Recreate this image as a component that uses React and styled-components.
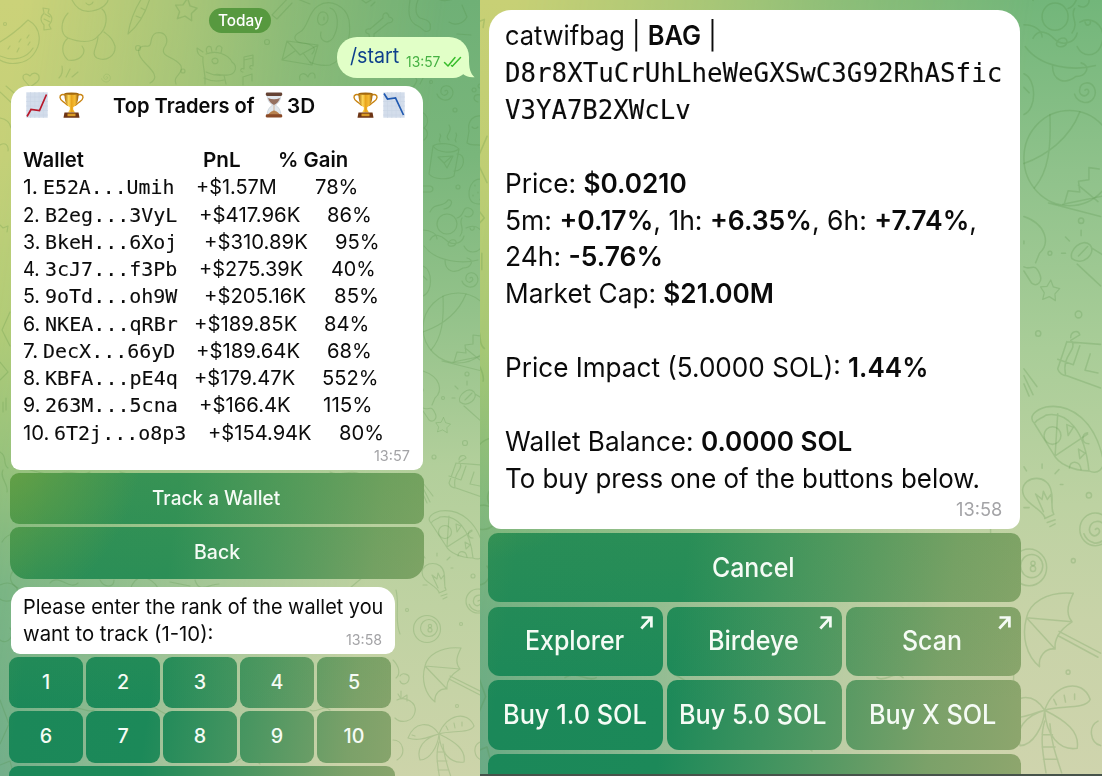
import React, { useLayoutEffect, useRef } from 'react';
import styled, { createGlobalStyle } from 'styled-components';

const GlobalStyle = createGlobalStyle`
  * { box-sizing: border-box; }
  body { margin: 0; overflow: hidden; font-family: Inter, "Liberation Sans", sans-serif; color: #0b0b0b; }
`;

/* ---------- text fitted to a column width ---------- */
const FitBox = styled.span`
  display: inline-block;
  flex: none;
  width: ${(p) => p.$w}px;
  margin-left: ${(p) => p.$ml || 0}px;
  white-space: pre;
  font-family: ${(p) => (p.$mono ? '"DejaVu Sans Mono", monospace' : 'inherit')};
  font-size: ${(p) => (p.$mono ? '0.97em' : '1em')};
  -webkit-text-stroke: ${(p) => (p.$mono ? '0.12px currentColor' : '0')};
`;
const FitInner = styled.span`
  display: inline-block;
  transform-origin: 0 50%;
`;
function Fit({ w, ml, mono, children }) {
  const ref = useRef(null);
  useLayoutEffect(() => {
    const el = ref.current;
    const apply = () => {
      el.style.transform = `scaleX(${(w + 0.6) / el.offsetWidth})`;
    };
    apply();
    document.fonts.ready.then(apply);
  }, [w]);
  return (
    <FitBox $w={w} $ml={ml} $mono={mono}>
      <FitInner ref={ref}>{children}</FitInner>
    </FitBox>
  );
}

/* ---------- wallpaper ---------- */
const Screen = styled.main`
  display: flex;
  width: 1102px;
  height: 776px;
  overflow: hidden;
`;
const Panel = styled.section`
  position: relative;
  flex: none;
  width: ${(p) => p.$w}px;
  height: 776px;
  overflow: hidden;
  isolation: isolate;
  background: linear-gradient(180deg, ${(p) => p.$right});
  &::before {
    content: '';
    position: absolute;
    inset: 0;
    z-index: -2;
    background: linear-gradient(180deg, ${(p) => p.$left});
    mask-image: linear-gradient(98deg, #000 4%, rgba(0, 0, 0, 0.62) 32%, rgba(0, 0, 0, 0.3) 50%, transparent 76%);
  }
`;
const Wallpaper = styled.svg`
  position: absolute;
  inset: 0;
  z-index: -1;
  width: 100%;
  height: 100%;
  fill: none;
  stroke: #4c8a3c;
  stroke-opacity: 0.21;
  stroke-width: 1.15;
  stroke-linecap: round;
  stroke-linejoin: round;
`;
const star = 'M0-9 L3-3 L9-2 L5 3 L6 9 L0 6 L-6 9 L-5 3 L-9-2 L-3-3Z';
const spiral = 'M0 0c2-2 4 1 2 3c-3 3-7 0-6-4c1-5 8-6 11-1c3 6-2 12-8 11c-4-1-6-3-7-6';
function Doodles({ transform }) {
  return (
    <g transform={transform}>
      {/* watermelon and candy */}
      <path d="M0 42C10 36 20 28 28 20C42 28 42 44 33 55C26 64 10 66 0 60M0 56C14 62 27 58 33 48" />
      <path d="M8 49l2-3M17 52l2-4M19 42l2-3M27 38l2-3M28 45l2-3" />
      <path d="M43 8l6 1-1 4c5 3 5 8 1 12l2 4-7 1 0-5c-4-4-4-8 0-12zM45 14l5 3M44 19l6 3" />
      {/* bear */}
      <path d="M72 0C76 8 82 13 92 11C104 9 108 2 108 0M68 13C60 22 60 34 68 38C61 44 61 54 68 60C78 62 88 54 82 46M68 38C78 42 92 44 98 36C108 28 108 14 102 9M98 36C98 46 90 54 97 58C106 62 116 56 115 46C112 36 106 34 104 32M86 3c2 3 6 2 7-1" />
      {/* carrot, star */}
      <path d="M128 34C130 22 134 10 142-2M128 34C138 26 146 12 150-2M136 16l5 2M141 8l4 2" />
      <path d={star} transform="translate(186 9) rotate(8) scale(1.2)" />
      <path d="M150 83C160 78 152 70 146 64C136 54 136 46 146 46C154 48 148 36 156 33C166 31 170 40 164 48C160 58 176 56 181 66C184 74 172 76 176 84" />
      <circle cx="138" cy="48" r="2.5" /><circle cx="183" cy="71" r="2" /><circle cx="267" cy="42" r="2.5" /><circle cx="5" cy="24" r="1.5" />
      {/* giraffe */}
      <path d="M203 52l-6-4c0 5 2 8 6 9M207 53c-2-5 1-8 4-6l1 5M216 50c0-4 4-6 6-2l-1 5M203 57C202 66 206 72 205 84M206 54C216 50 228 54 232 62C238 66 236 74 228 75C222 76 218 73 214 75M212 60c2-3 6-2 6 1s-5 4-6 0M206 72c6 3 12 4 18 3M204 78c6 3 12 4 20 2M224 75l2 9" />
      {/* notes */}
      <path d="M244 69V57l9-2v11M244 60l9-2M244 69c-3-2-5 3-1 3M253 66c-3-2-5 3-1 3M243 85v-8l9-3v7" />
      <path d="M24 80c-3-5 2-8 6-4c3-5 10-3 9 3c-1 4-7 6-9 8zM62 66c1 5 0 9-3 12M70 69l-4 8M78 72l-6 5" />
      <path d={spiral} transform="translate(106 77) scale(.55)" />
      {/* dog with envelope */}
      <path d="M300 32C292 36 294 42 302 43C312 44 318 48 312 54M300 32C308 28 308 12 318 6C330-2 346 6 349 20C352 40 344 60 330 65C322 66 314 64 310 62M319 14c3-4 9-2 9 4s-8 10-10 4c-1-3 0-6 1-8M324 17v3M330 8c8 2 10 18 3 30c-6 8-14 2-12-6" />
      <path d="M287 41L318 45L312 65L282 60ZM287 41L300 55L318 45M282 60l13-9M312 65l-9-12" />
      <path d="M272 15L290-4M290-4l20 8M272 15l5 4L292 3" />
      <path d="M369 34c-5-1-4-6 1-5l13-11c-1-6 5-7 6-1c6 1 4 6-1 6L374 34c1 6-5 7-5 0z" />
      <path d="M410 0C408 12 408 22 418 26C424 29 424 34 430 30C432 20 426 20 420 18C414 14 416 4 418 0M362 0l4 3 5-3M371 6l4-4M440 0c8 2 18-2 20-5M449 22c6 4 14 2 18-5l-5-12M457 34l14 1" />
      <path d="M0 92l18 17M6 86l14 12M0 118c6 1 10 4 11 10M0 145c5-3 9 0 8 6" />
      {/* spiral, paw, mug */}
      <path d={spiral} transform="translate(445 91)" />
      <circle cx="455" cy="110" r="2" /><circle cx="458" cy="187" r="2" /><circle cx="431" cy="82" r="1.5" />
      <path d="M400 78c4-6 14-4 17 2c-2 8-10 12-16 7M423 78l-3 6M300 80c-2-6 4-9 8-3c2-6 8-5 7 1M422 112c7 4 7 12 2 16c4 2 5 8 0 12" />
      <path d="M480 95c-7-2-8 6-2 7M474 88a2 2 0 1 0 .1 0M480 84a2 2 0 1 0 .1 0M484 117c-10-4-17 4-15 14l-2 12c5 4 10 0 16 3M472 127c2 2 4 2 6 0" />
      <path d="M433 146L429 174C434 180 448 180 454 176L459 149C452 154 438 153 433 146C438 142 454 143 459 149M457 154c10-1 8 18-3 17M438 157l15-1-6 12-3-5zM444 163l7-6M440 142c-3-4 3-4 0-8M449 140c-6-5 5-8 0-15M456 142c-3-5 3-4 0-9" />
      <path d="M423 186h7c4 1 4 5 0 6h-7M484 180c-10-4-15 6-15 14s6 12 15 9M475 185v1M478 192v1M473 195v1M480 199v1" />
      {/* noodle bowl */}
      <circle cx="447" cy="224" r="10" />
      <path d="M430 212c4-10 14-4 18-12c6-1 4 8-4 9M457 218c8-2 5-12 12-10c8 2 3 12-4 8M423 230c8 0 14 4 14 9M424 246c12 16 38 18 54 14M430 240c4-8 12-4 16 0c6 6 16 4 18-4M448 244c2-6 9-5 8-1s-8 4-8 1M460 236c6-8-2-12 2-18M466 228c12-6 22 6 16 18c-4 8-14 8-18 0M470 228c1 4 5 2 4-1M445 260c0 12 10 14 18 8c8 0 12-8 4-10" />
      <path d={spiral} transform="translate(470 278)" />
      <path d="M423 266c10 4 10 26 0 30M423 276l4 4" />
      {/* ball and plant */}
      <circle cx="458" cy="328" r="35" />
      <path d="M443 296c1 24-1 42-12 54M466 294c-8 20-26 32-43 38M454 362l3-10 9 1-1-8 8-1v-9l8 1M453 362l30-6M442 361l40 10M465 348l15 12" />
      {/* baby, flashlight */}
      <path d="M423 371c18 6 20 20 12 27l-3 7M423 408c6 3 8-4 12 5c3 6-2 10-6 7l-6-9M423 389v2" />
      <circle cx="467" cy="374" r="2" /><circle cx="443" cy="398" r="1.5" /><circle cx="465" cy="443" r="2.5" /><circle cx="434" cy="457" r="2" />
      <path d="M460 402c-3-6 8-16 14-10c5 6-6 16-14 10M465 400l7-7M464 406l18 16M475 394l10 6M458 389l-3-3M455 398l-3 0M467 381l0 4" />
      <path d={star} transform="translate(443 425) rotate(5) scale(.82)" />
      {/* gift */}
      <path d="M456 463L449 483C450 486 453 488 456 488L482 497M456 463L482 465M460 463c4 6-8 10-5 24M449 476l12 4 5-14M474 472l-4 12 10 2M459 460c0-5 6-6 7-2l-7 4" />
      <path d="M423 483l10 13M423 488l7 14M423 494l4 9" />
      {/* pizza */}
      <path d="M431 523C426 518 432 513 440 511C460 508 478 522 484 550C485 556 480 561 473 558C460 558 449 552 446 546L431 523C434 519 436 520 440 517C456 514 470 528 473 558M449 516L447 547L472 531" />
      <circle cx="445" cy="532" r="6.5" /><path d="M456 524l5 2-4 6zM465 542l5 3-4 4zM458 556c0-6 8-6 9 1M472 530c-5 1-5 8 1 8" />
      {/* bulb */}
      <path d="M439 592C436 585 422 582 422 572C423 561 442 560 444 573C446 580 443 584 446 590L439 593ZM438 588l-6-13 5 4 1-6 3 6 3-4 1 13M441 596l6-2M443 599l4-2" />
      <path d="M425 558l-2-3M437 556v-3M447 560l3-3M451 568h2M427 585h-4" />
      <circle cx="473" cy="576" r="2" /><circle cx="461" cy="624" r="1.5" /><circle cx="407" cy="610" r="1.5" /><circle cx="457" cy="706" r="1.5" />
      <path d={spiral} transform="translate(478 601) scale(1.1)" /><circle cx="478" cy="601" r="12" />
      {/* billiard ball */}
      <circle cx="427" cy="629" r="13.5" /><circle cx="429" cy="628" r="8.5" /><circle cx="430" cy="626" r="1.6" /><circle cx="430" cy="630" r="2" />
      {/* umbrella */}
      <path d="M461 648C440 646 427 656 425 666C421 680 425 694 435 702C434 694 440 688 447 689C446 680 452 674 460 669C454 662 458 654 461 648M425 666L460 669M425 666L447 689M450 676L482 692M449 679L480 695" />
      <path d="M393 660c6 6 8 14 3 18M400 676c2-4 10-2 9 3s-7 7-9 2M397 700c8-4 20 2 18 12c-2 10-14 12-20 6M398 694l3 5 6-4 0 6M401 691v7" />
      {/* palm */}
      <path d="M439 734C430 720 414 722 408 738C420 742 430 736 439 734C424 738 416 748 420 760C430 760 438 746 439 734C456 742 466 750 464 762C450 764 440 752 439 734C446 714 468 710 474 726C470 734 450 730 439 734M439 742C435 754 438 768 440 780M443 744C444 758 448 768 452 780M437 752h8M437 761h10M438 770h11M412 735l3 1M446 726l2 4M454 723l1 5M462 722l0 4" />
      <path d="M480 742c-8 4-6 16 2 18M393 740c10 0 14 14 4 20" />
      {/* left strip and gaps between messages */}
      <path d="M0 225l3 3 5-2-1 6M10 312L2 330l8 16M0 362l8 10-8 8M3 402v10M6 398v12M0 452c8 4 2 12 8 16M3 470c-4 8 6 14 4 22M2 542c8-14 26-8 28 2M14 570c-6 6-4 14 4 18" />
      <path d="M50 583c8-10 20 8 28 0M100 580c4 8 14 8 14 0M130 590c6-20 22-12 28-2M170 582l20 4M195 580c4 14 14 4 24 4M350 588l40-34M0 585c12-6 22 4 16 12c-8 8-16 2-16 2M396 590c4 16-2 30 4 44M0 640c8 6 16-6 10-12M0 700l9 24-9 20M0 765l10-4 4 15M236 762c6-6 16-6 24 2M70 710c8-6 18 4 24 0M155 708l14 8M310 710c6 4 14-6 20 0M30 470l16 4M60 474c10-6 20 4 30-2M120 472l16 4M330 472c10 6 20-4 30 2" />
    </g>
  );
}

/* ---------- bubbles ---------- */
const Column = styled.div`
  display: flex;
  flex-direction: column;
  align-items: flex-start;
  padding: ${(p) => p.$pad};
`;
const DatePill = styled.div`
  align-self: center;
  display: flex;
  align-items: center;
  justify-content: center;
  width: 62px;
  height: 25px;
  margin-top: 8px;
  padding-bottom: 1px;
  border-radius: 13px;
  background: #57993f;
  color: #fff;
  font-size: 16px;
  font-weight: 500;
`;
const OutBubble = styled.div`
  position: relative;
  align-self: flex-end;
  display: flex;
  align-items: center;
  width: 132px;
  height: 40.5px;
  margin: 4px 11px 0 0;
  padding: 0 0 3px 13px;
  border-radius: 20px 20px 16px 20px;
  background: #e1ffc7;
  color: #0d3f8c;
  font-size: 20.8px;
`;
const Tail = styled.svg`
  position: absolute;
  right: -6px;
  bottom: 0;
  width: 22px;
  height: 22px;
  fill: #e1ffc7;
`;
const SentMeta = styled.span`
  position: relative;
  display: flex;
  align-items: center;
  gap: 3px;
  margin: 12px 0 0 7px;
  color: #45b143;
  font-size: 14px;
  svg { width: 19px; height: 13px; fill: none; stroke: #38bd2c; stroke-width: 1.5; stroke-linecap: round; stroke-linejoin: round; }
`;
const Bubble = styled.article`
  position: relative;
  width: ${(p) => p.$w}px;
  height: ${(p) => p.$h}px;
  margin: ${(p) => p.$m};
  padding: ${(p) => p.$pad};
  border-radius: ${(p) => p.$r};
  background: #fff;
  font-size: ${(p) => p.$fs}px;
  line-height: ${(p) => p.$lh}px;
`;
const Line = styled.div`
  display: flex;
  height: ${(p) => p.$h || 27.27}px;
  align-items: ${(p) => p.$align || 'baseline'};
  font-weight: ${(p) => (p.$bold ? 600 : 400)};
`;
const Strong = styled.b`
  font-weight: 600;
`;
const Time = styled.time`
  position: absolute;
  right: ${(p) => p.$right}px;
  bottom: ${(p) => p.$bottom}px;
  color: #a3a3a6;
  font-size: ${(p) => p.$fs}px;
  line-height: 1;
`;

/* ---------- keyboard ---------- */
const Keyboard = styled.div`
  display: grid;
  grid-template-columns: repeat(${(p) => p.$cols}, 1fr);
  gap: ${(p) => p.$gap};
  width: ${(p) => p.$w}px;
  margin: ${(p) => p.$m};
`;
const Key = styled.button`
  position: relative;
  display: flex;
  align-items: center;
  justify-content: center;
  height: ${(p) => p.$h}px;
  padding: ${(p) => p.$pad || '0 1px 1px 0'};
  grid-column: ${(p) => (p.$wide ? '1 / -1' : 'auto')};
  border: 0;
  border-radius: ${(p) => p.$r || '9px'};
  color: #f5fbf5;
  font-family: inherit;
  font-size: ${(p) => p.$fs || 19.7}px;
  font-weight: 500;
  background-attachment: fixed;
  background-repeat: no-repeat;
  background-image:
    radial-gradient(ellipse 30% 24% at 0% 55%, rgba(128, 168, 60, 0.75), rgba(110, 165, 62, 0)),
    linear-gradient(180deg, rgba(92, 160, 78, 0.5) 55%, rgba(92, 160, 78, 0) 92%),
    linear-gradient(98deg, #3f9454 0%, #1b8859 20%, #1c8959 42%, #4a9661 60%, #7ba169 77%, #9aa970 97%);
  background-size: ${(p) => p.$bg || '480px 776px'};
  background-position: ${(p) => p.$bgPos || '0 0'};
`;
const rightKey = { $bg: '622px 1075px', $bgPos: '480px -288px', $fs: 26.8, $r: '10px 10px 12px 12px', $pad: '0 3px 2px 0' };
const LinkArrow = styled.svg`
  position: absolute;
  top: 9px;
  right: 10px;
  width: 13px;
  height: 14px;
  fill: none;
  stroke: #f5fbf5;
  stroke-width: 2.7;
`;
const Arrow = () => (
  <LinkArrow viewBox="0 0 13 14"><path d="M1.5 1.5H11.4V11.5M11 2L1.3 12.5" /></LinkArrow>
);
const BottomEdge = styled.div`
  position: absolute;
  left: 0;
  right: 0;
  bottom: 0;
  height: 2px;
  background: #46534a;
`;

/* ---------- emoji drawings ---------- */
const Emoji = styled.svg`
  flex: none;
  width: ${(p) => p.$w}px;
  height: 26px;
  margin-left: ${(p) => p.$ml || 0}px;
`;
function Chart({ ml, up }) {
  return (
    <Emoji $w={22} $ml={ml} viewBox="0 0 22 26">
      <rect x=".3" y=".3" width="21.4" height="25.4" fill="#d3ddeb" />
      <path d="M4.5 0V26M8.8 0V26M13.1 0V26M17.4 0V26M0 5H22M0 9.5H22M0 14H22M0 18.5H22M0 23H22" stroke="#c9d5e4" strokeWidth=".6" />
      {up
        ? <path d="M1 24.5L5 17.5L13.5 18.5L20.5 2.5" fill="none" stroke="#b8182a" strokeWidth="1.7" />
        : <path d="M1 1.5L4.5 7L12.5 6L20.5 23" fill="none" stroke="#1e58b0" strokeWidth="1.7" />}
    </Emoji>
  );
}
function Trophy({ ml }) {
  return (
    <Emoji $w={25} $ml={ml} viewBox="0 0 25 26">
      <defs>
        <linearGradient id="gold" x1="0" x2="1">
          <stop offset="0" stopColor="#a96a08" /><stop offset=".3" stopColor="#ffd95a" />
          <stop offset=".5" stopColor="#e9a51c" /><stop offset=".75" stopColor="#f6bd35" /><stop offset="1" stopColor="#94590a" />
        </linearGradient>
      </defs>
      <path d="M7 3.5C3.5 1.5.8 2.8 1 5.5C1.3 9 4.5 9.5 6.5 11.5C8 13 8.5 13.5 10 13.5M18 3.5C21.5 1.5 24.2 2.8 24 5.5C23.7 9 20.5 9.5 18.5 11.5C17 13 16.5 13.5 15 13.5" fill="none" stroke="#c98512" strokeWidth="1.4" />
      <path d="M5.5 1.3H19.5C19.6 9 18 13 14.2 15.2V17.5L16 20.5H9L10.8 17.5V15.2C7 13 5.4 9 5.5 1.3Z" fill="url(#gold)" />
      <ellipse cx="12.5" cy="1.6" rx="7" ry="1.2" fill="#a3690f" />
      <path d="M5.5 20.5H19.5L20.5 25.7H4.5Z" fill="#6d3515" />
      <rect x="8.5" y="21.6" width="8" height="2.6" fill="#d99a25" />
    </Emoji>
  );
}
function Hourglass({ ml }) {
  return (
    <Emoji $w={18} $ml={ml} viewBox="0 0 18 26">
      <path d="M2.2 2.5H15.8C16 8 13.5 11 10.3 13C13.5 15 16 18 15.8 23.5H2.2C2 18 4.5 15 7.7 13C4.5 11 2 8 2.2 2.5Z" fill="#e2e8ee" stroke="#b5bec7" strokeWidth=".5" />
      <path d="M3 6C7 7.8 11 7.8 15 6C14 9.5 12 11.2 9 13C6 11.2 4 9.5 3 6Z" fill="#967161" />
      <path d="M9 13V20M3 23C5 20 8 19 9 18.8C10 19 13 20 15 23Z" fill="#b8824f" stroke="#b8824f" strokeWidth=".5" />
      <rect x=".8" y=".5" width="16.4" height="3.4" rx="1.3" fill="#654234" />
      <rect x=".8" y="22.2" width="16.4" height="3.4" rx="1.3" fill="#8a4a27" />
    </Emoji>
  );
}

/* rank, rank width, address, [left, width] of address, profit and gain */
const traders = [
  ['1.', 14, 'E52A...Umih', [42.5, 130.5], '+$1.57M', [195.5, 80.5], '78%', [314.5, 42.5]],
  ['2.', 16.5, 'B2eg...3VyL', [44.5, 131.5], '+$417.96K', [198.5, 100.5], '86%', [326.5, 44.5]],
  ['3.', 16.5, 'BkeH...6Xoj', [44.5, 131.5], '+$310.89K', [204, 103], '95%', [334.5, 44.5]],
  ['4.', 16.5, '3cJ7...f3Pb', [45, 131.5], '+$275.39K', [199, 104], '40%', [331, 44.5]],
  ['5.', 16.5, '9oTd...oh9W', [45, 131.5], '+$205.16K', [204, 102], '85%', [334, 44]],
  ['6.', 16.5, 'NKEA...qRBr', [44.5, 132], '+$189.85K', [193.5, 103], '84%', [324, 44.5]],
  ['7.', 14.5, 'DecX...66yD', [42.5, 131.5], '+$189.64K', [196, 104], '68%', [327, 44.5]],
  ['8.', 16.5, 'KBFA...pE4q', [44.5, 132], '+$179.47K', [193.5, 101], '552%', [322, 56]],
  ['9.', 16.5, '263M...5cna', [45, 132], '+$166.4K', [199, 91], '115%', [323, 49.5]],
  ['10.', 26, '6T2j...o8p3', [54, 131.5], '+$154.94K', [208, 103], '80%', [339, 44.5]],
];
const TEXT_LEFT = 23;
function TraderRow({ row }) {
  const [rank, rw, addr, a, pnl, p, gain, g] = row;
  return (
    <Line>
      <Fit w={rw}>{rank}</Fit>
      <Fit w={a[1]} ml={a[0] - TEXT_LEFT - rw} mono>{addr}</Fit>
      <Fit w={p[1]} ml={p[0] - a[0] - a[1]}>{pnl}</Fit>
      <Fit w={g[1]} ml={g[0] - p[0] - p[1]}>{gain}</Fit>
    </Line>
  );
}

function LeftChat() {
  return (
    <Panel
      $w={480}
      $right="#6fb076 0%, #79b67b 20%, #93c28a 40%, #b2cf9b 60%, #bfd2a2 78%, #cdd4aa 100%"
      $left="#cbd279 0%, #c5d078 20%, #b3cc76 42%, #93c079 60%, #6fb07f 76%, #5ca582 100%"
    >
      <Wallpaper><Doodles /></Wallpaper>
      <Column $pad="0">
        <DatePill><Fit w={44.5}>Today</Fit></DatePill>
        <OutBubble>
          <Tail viewBox="0 0 22 22"><path d="M16 2C15.8 12 17.5 18 21.6 21.2C16 21.8 12.5 20 10 18L4 14Z" /></Tail>
          <Fit w={48.5}>/start</Fit>
          <SentMeta>
            <Fit w={34}>13:57</Fit>
            <svg viewBox="0 0 19 13"><path d="M1.5 7.5L5 11L12 2.5M8.5 10.5L9.3 11.2L17.5 2.5" /></svg>
          </SentMeta>
        </OutBubble>
        <Bubble $w={411.5} $h={383.5} $m="8.5px 0 0 11px" $pad="5.5px 0 0 12px" $r="17px 17px 9px 9px" $fs={20.6} $lh={27.27}>
          <Line $bold $align="center">
            <Chart up ml={3} />
            <Trophy ml={11} />
            <Fit w={141} ml={28.5}>Top Traders of</Fit>
            <Hourglass ml={11} />
            <Fit w={27.5} ml={4.5}>3D</Fit>
            <Trophy ml={38} />
            <Chart ml={5} />
          </Line>
          <Line />
          <Line $bold>
            <Fit w={60.5}>Wallet</Fit>
            <Fit w={37.5} ml={119}>PnL</Fit>
            <Fit w={69.5} ml={37.5}>% Gain</Fit>
          </Line>
          {traders.map((row) => <TraderRow key={row[0]} row={row} />)}
          <Time $right={13.5} $bottom={6.5} $fs={14}><Fit w={35.5}>13:57</Fit></Time>
        </Bubble>
        <Keyboard $cols={1} $gap="3px" $w={414} $m="3px 0 0 9.5px">
          <Key $h={51.5}><Fit w={128}>Track a Wallet</Fit></Key>
          <Key $h={51.5} $r="9px 9px 17px 17px"><Fit w={45}>Back</Fit></Key>
        </Keyboard>
        <Bubble $w={384} $h={67} $m="8.5px 0 0 11px" $pad="6px 0 0 12px" $r="17px 17px 9px 9px" $fs={20.6} $lh={27.27}>
          <Line><Fit w={359.5}>Please enter the rank of the wallet you</Fit></Line>
          <Line><Fit w={190}>want to track (1-10):</Fit></Line>
          <Time $right={13.5} $bottom={7} $fs={14}><Fit w={36}>13:58</Fit></Time>
        </Bubble>
        <Keyboard $cols={5} $gap="3px" $w={382} $m="2.5px 0 0 9px">
          {['1', '2', '3', '4', '5', '6', '7', '8', '9', '10'].map((n) => <Key key={n} $h={51.5} $pad="0 0 1px">{n}</Key>)}
        </Keyboard>
        <Keyboard $cols={1} $gap="0" $w={386} $m="3px 0 0 9px"><Key $h={51.5} /></Keyboard>
      </Column>
    </Panel>
  );
}

function RightLine({ w, mono, children }) {
  return <Line $h={36.87}>{w ? <Fit w={w} mono={mono}>{children}</Fit> : null}</Line>;
}

function RightChat() {
  return (
    <Panel
      $w={622}
      $right="#72b67a 0%, #8fc28b 22%, #a9cd98 45%, #bdd2a2 65%, #c8d3a8 80%, #cfd4ad 100%"
      $left="#c8d075 0%, #bfce73 22%, #a5c773 45%, #7db678 65%, #65aa7d 80%, #58a27e 100%"
    >
      <Wallpaper><Doodles transform="translate(-6 -288) scale(1.3 1.36)" /></Wallpaper>
      <Column $pad="10px 0 0 8px">
        <Bubble $w={531} $h={518.5} $m="0 0 0 1px" $pad="8.3px 0 0 16px" $r="22px 22px 12px 12px" $fs={27.2} $lh={36.87}>
          <RightLine w={211}>catwifbag | <Strong>BAG</Strong> |</RightLine>
          <RightLine w={496.5} mono>D8r8XTuCrUhLheWeGXSwC3G92RhASfic</RightLine>
          <RightLine w={185.5} mono>V3YA7B2XWcLv</RightLine>
          <RightLine />
          <RightLine w={181.5}>Price: <Strong>$0.0210</Strong></RightLine>
          <RightLine w={471.5}>5m: <Strong>+0.17%</Strong>, 1h: <Strong>+6.35%</Strong>, 6h: <Strong>+7.74%</Strong>,</RightLine>
          <RightLine w={157}>24h: <Strong>-5.76%</Strong></RightLine>
          <RightLine w={268}>Market Cap: <Strong>$21.00M</Strong></RightLine>
          <RightLine />
          <RightLine w={423}>Price Impact (5.0000 SOL): <Strong>1.44%</Strong></RightLine>
          <RightLine />
          <RightLine w={347}>Wallet Balance: <Strong>0.0000 SOL</Strong></RightLine>
          <RightLine w={474.5}>To buy press one of the buttons below.</RightLine>
          <Time $right={18} $bottom={10} $fs={18}><Fit w={46}>13:58</Fit></Time>
        </Bubble>
        <Keyboard $cols={3} $gap="4.5px 3.5px" $w={533} $m="4.5px 0 0 0">
          <Key {...rightKey} $h={69.2} $wide><Fit w={82}>Cancel</Fit></Key>
          <Key {...rightKey} $h={69.2}><Fit w={99}>Explorer</Fit><Arrow /></Key>
          <Key {...rightKey} $h={69.2}><Fit w={90.5}>Birdeye</Fit><Arrow /></Key>
          <Key {...rightKey} $h={69.2}><Fit w={59}>Scan</Fit><Arrow /></Key>
          <Key {...rightKey} $h={69.2}><Fit w={143}>Buy 1.0 SOL</Fit></Key>
          <Key {...rightKey} $h={69.2}><Fit w={147}>Buy 5.0 SOL</Fit></Key>
          <Key {...rightKey} $h={69.2}><Fit w={126.5}>Buy X SOL</Fit></Key>
          <Key {...rightKey} $h={69.2} $wide />
        </Keyboard>
      </Column>
      <BottomEdge />
    </Panel>
  );
}

export default function App() {
  return (
    <>
      <GlobalStyle />
      <Screen>
        <LeftChat />
        <RightChat />
      </Screen>
    </>
  );
}
